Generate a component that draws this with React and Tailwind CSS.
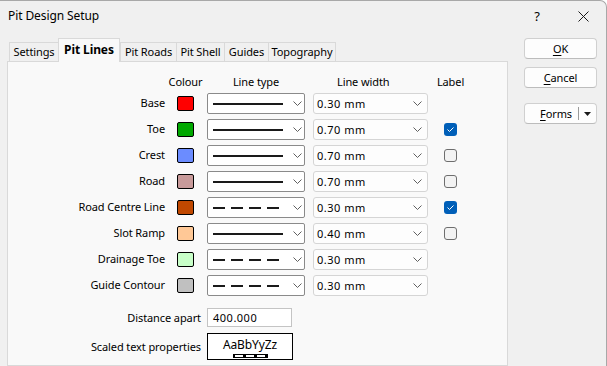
import React from "react";

const rows = [
  { name: "Base", color: "#ff0000", dashed: false, width: "0.30 mm", label: null },
  { name: "Toe", color: "#00a800", dashed: false, width: "0.70 mm", label: true },
  { name: "Crest", color: "#6b8cff", dashed: false, width: "0.70 mm", label: false },
  { name: "Road", color: "#c89a9a", dashed: false, width: "0.70 mm", label: false },
  { name: "Road Centre Line", color: "#c04800", dashed: true, width: "0.30 mm", label: true },
  { name: "Slot Ramp", color: "#ffc896", dashed: false, width: "0.40 mm", label: false },
  { name: "Drainage Toe", color: "#c8ffc8", dashed: true, width: "0.30 mm", label: null },
  { name: "Guide Contour", color: "#c0c0c0", dashed: true, width: "0.30 mm", label: null },
];

const tabs = [
  { t: "Settings", w: "w-[49px]" },
  { t: "Pit Lines", w: "w-[62px]", active: true },
  { t: "Pit Roads", w: "w-[56px]" },
  { t: "Pit Shell", w: "w-[48px]" },
  { t: "Guides", w: "w-[44px]" },
  { t: "Topography", w: "w-[68px]" },
];

function Chevron() {
  return (
    <svg width="9" height="5" viewBox="0 0 9 5" className="shrink-0">
      <polyline points="0.5,0.5 4.5,4.5 8.5,0.5" fill="none" stroke="#5f5f5f" strokeWidth="1" />
    </svg>
  );
}

function LineType({ dashed }) {
  return (
    <div className="w-[98px] h-[21px] bg-white border border-[#8a8a8a] rounded-[2px] flex items-center pl-[5px] pr-[3px]">
      <svg width="70" height="4" viewBox="0 0 70 4" className="shrink-0">
        {dashed ? (
          <line x1="0" y1="2" x2="70" y2="2" stroke="#1a1a1a" strokeWidth="2" strokeDasharray="12 6" />
        ) : (
          <line x1="0" y1="2" x2="70" y2="2" stroke="#1a1a1a" strokeWidth="2" />
        )}
      </svg>
      <div className="ml-[10px]">
        <Chevron />
      </div>
    </div>
  );
}

function LineWidth({ value }) {
  return (
    <div className="w-[115px] h-[21px] bg-[#fdfdfd] border border-[#d5d5d5] rounded-[3px] flex items-center justify-between pl-[3px] pr-[5px]">
      <span className="tracking-[0.5px]">{value}</span>
      <Chevron />
    </div>
  );
}

function Check({ checked }) {
  if (checked === null) return <div className="w-[13px] h-[13px]" />;
  if (checked)
    return (
      <div className="w-[13px] h-[13px] rounded-[3px] bg-[#005fb8] flex items-center justify-center">
        <svg width="9" height="7" viewBox="0 0 9 7">
          <polyline points="1.5,3.5 3.5,5.5 7.5,1.5" fill="none" stroke="white" strokeWidth="1" />
        </svg>
      </div>
    );
  return <div className="w-[13px] h-[13px] rounded-[3px] bg-[#f3f3f3] border border-[#6e6e6e]" />;
}

function Btn({ children, className = "" }) {
  return (
    <div
      className={
        "w-[73px] h-[21px] bg-[#fdfdfd] border border-[#d0d0d0] border-b-[#bcbcbc] rounded-[4px] flex items-center justify-center " +
        className
      }
    >
      {children}
    </div>
  );
}

export default function App() {
  return (
    <div className="w-[607px] h-[366px] overflow-hidden bg-[#f0f0f0] font-['Noto_Sans',sans-serif] text-[11px] leading-[16px] tracking-[-0.1px] text-black border-t border-r border-[#a8a8a8] rounded-tr-[7px] flex flex-col">
      {/* Title bar */}
      <div className="h-[30px] shrink-0 flex items-center pl-[8px] pr-[17px]">
        <span className="flex-1 text-[12px]">Pit Design Setup</span>
        <span className="w-[16px] text-center text-[13px]">?</span>
        <svg width="11" height="11" viewBox="0 0 11 11" className="ml-[33px]">
          <path d="M0.5 0.5 L10.5 10.5 M10.5 0.5 L0.5 10.5" stroke="#1a1a1a" strokeWidth="1" />
        </svg>
      </div>

      <div className="flex flex-1 min-h-0">
        {/* Left: tabs + panel */}
        <div className="ml-[7px] w-[501px] flex flex-col mt-[7px]">
          <div className="flex items-end pl-[2px] h-[23px] shrink-0">
            {tabs.map((t) =>
              t.active ? (
                <div
                  key={t.t}
                  className={
                    t.w +
                    " h-[24px] -mb-px relative z-10 bg-[#f9f9f9] border border-b-0 border-[#d9d9d9] flex items-center justify-center font-bold pb-[2px] text-[12px]"
                  }
                >
                  {t.t}
                </div>
              ) : (
                <div
                  key={t.t}
                  className={
                    t.w +
                    " h-[19px] bg-[#f0f0f0] border border-b-0 border-r-0 border-[#d9d9d9] last:border-r flex items-center justify-center"
                  }
                >
                  {t.t}
                </div>
              )
            )}
          </div>
          <div className="flex-1 bg-[#f9f9f9] border border-[#d9d9d9] pt-[12px]">
            {/* header */}
            <div className="flex h-[16px] items-center">
              <div className="w-[157px]" />
              <div className="ml-[12px] w-[17px] flex justify-center whitespace-nowrap">Colour</div>
              <div className="ml-[13px] w-[98px] flex justify-center whitespace-nowrap">Line type</div>
              <div className="ml-[8px] w-[115px] pl-[24px] whitespace-nowrap">Line width</div>
              <div className="ml-[16px] w-[13px] flex justify-center whitespace-nowrap">Label</div>
            </div>
            <div className="mt-[3px] flex flex-col gap-[5px]">
              {rows.map((r) => (
                <div key={r.name} className="flex h-[21px] items-center">
                  <div className="w-[157px] text-right whitespace-nowrap -mt-[2px]">{r.name}</div>
                  <div
                    className="ml-[12px] w-[17px] h-[15px] border border-black rounded-[2px]"
                    style={{ backgroundColor: r.color }}
                  />
                  <div className="ml-[13px]">
                    <LineType dashed={r.dashed} />
                  </div>
                  <div className="ml-[8px]">
                    <LineWidth value={r.width} />
                  </div>
                  <div className="ml-[16px]">
                    <Check checked={r.label} />
                  </div>
                </div>
              ))}
            </div>
            <div className="mt-[12px] flex h-[19px] items-center">
              <div className="w-[193px] text-right whitespace-nowrap">Distance apart</div>
              <div className="ml-[6px] w-[85px] h-[19px] bg-white border border-[#c4c4c4] flex items-center pl-[5px] tracking-[0.5px]">
                400.000
              </div>
            </div>
            <div className="mt-[6px] flex h-[27px] items-center">
              <div className="w-[193px] text-right whitespace-nowrap">Scaled text properties</div>
              <div className="ml-[6px] w-[86px] h-[27px] bg-white border border-black flex flex-col items-center pt-[3px]">
                <span className="leading-[16px] text-[12px]">AaBbYyZz</span>
                <div className="mt-[1px] w-[35px] h-[4px] bg-black flex items-center justify-center gap-[3px] px-[1px]">
                  <div className="w-[8px] h-[2px] bg-white" />
                  <div className="w-[8px] h-[2px] bg-white" />
                  <div className="w-[8px] h-[2px] bg-white" />
                </div>
              </div>
            </div>
          </div>
        </div>

        {/* Right buttons */}
        <div className="ml-[16px] mt-[7px] flex flex-col">
          <Btn>
            <span>
              <span className="underline underline-offset-2">O</span>K
            </span>
          </Btn>
          <Btn className="mt-[8px]">
            <span>
              <span className="underline underline-offset-2">C</span>ancel
            </span>
          </Btn>
          <Btn className="mt-[15px] !justify-end">
            <span className="pr-[6px]">
              <span className="underline underline-offset-2">F</span>orms
            </span>
            <div className="w-px h-[13px] bg-[#9a9a9a]" />
            <svg width="7" height="4" viewBox="0 0 7 4" className="mx-[5px]">
              <polygon points="0,0 7,0 3.5,4" fill="#1a1a1a" />
            </svg>
          </Btn>
        </div>
      </div>
    </div>
  );
}
